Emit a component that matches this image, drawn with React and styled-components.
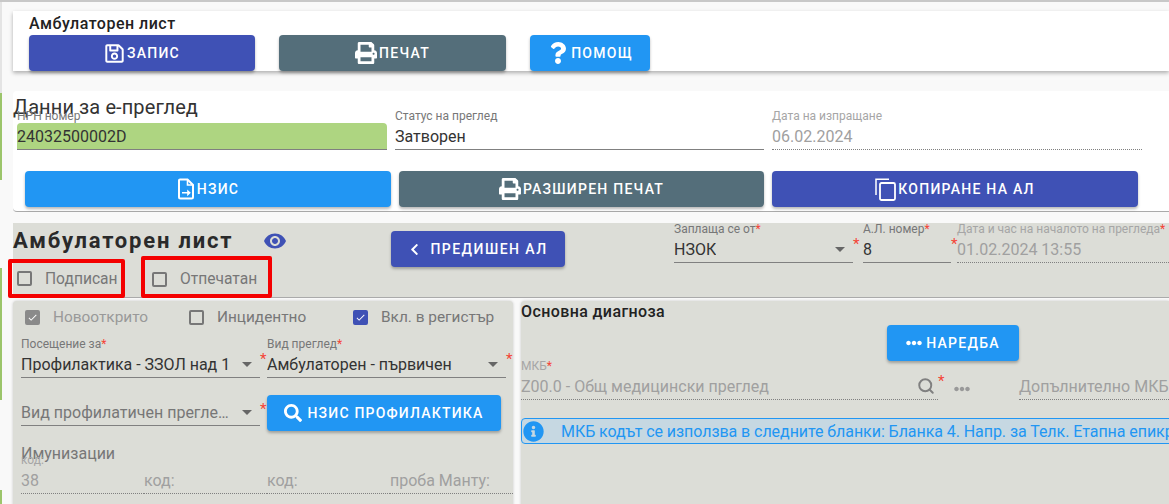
import React from "react";
import styled, { createGlobalStyle } from "styled-components";
import {
  FaRegSave,
  FaPrint,
  FaQuestion,
  FaChevronLeft,
  FaSearch,
  FaEllipsisH,
  FaInfoCircle,
} from "react-icons/fa";
import { FiSearch } from "react-icons/fi";
import { MdVisibility, MdArrowDropDown, MdCheck } from "react-icons/md";

const INDIGO = "#3f51b5";
const SLATE = "#546e7a";
const BLUE = "#2196f3";
const SHEET = "#dcddd7";

const GlobalStyle = createGlobalStyle`
  html, body {
    margin: 0;
    padding: 0;
    font-family: Roboto, "Liberation Sans", sans-serif;
    color: #222;
  }
  * {
    box-sizing: border-box;
  }
`;

const Page = styled.div`
  height: 504px;
  overflow: hidden;
  padding-left: 13px;
  border-top: 2px solid #c8c8c8;
  background-color: #f9f9f9;
  background-image: linear-gradient(
    to bottom,
    #e4e4e4 91px,
    #9cc56b 91px,
    #9cc56b 178px,
    transparent 178px,
    transparent 266px,
    #9cc56b 266px,
    #9cc56b 398px,
    transparent 398px,
    transparent 488px,
    #9cc56b 488px
  );
  background-size: 2px 100%;
  background-repeat: no-repeat;
`;

const ActionCard = styled.section`
  margin-top: 9px;
  height: 60px;
  padding: 1px 0 0 16px;
  background: #fff;
  box-shadow: 0 2px 4px rgba(0, 0, 0, 0.3);
`;

const CardTitle = styled.div`
  font-size: 16px;
  font-weight: 500;
  letter-spacing: 0.5px;
  line-height: 23px;
`;

const ButtonRow = styled.div`
  display: flex;
  gap: 24px;
`;

const Button = styled.button`
  display: flex;
  align-items: center;
  justify-content: center;
  gap: ${(p) => p.$gap ?? 2}px;
  flex: none;
  width: ${(p) => (p.$w ? `${p.$w}px` : "auto")};
  height: 36px;
  padding: 0;
  border: none;
  border-radius: 4px;
  background: ${(p) => p.$color};
  color: #fff;
  font-family: inherit;
  font-size: 14px;
  font-weight: 500;
  letter-spacing: 1.25px;
  text-transform: uppercase;
  box-shadow: 0 2px 3px rgba(0, 0, 0, 0.28);

  svg {
    flex: none;
  }
`;

const ExamCard = styled.section`
  margin-top: 20px;
  height: 121px;
  padding-top: 4px;
  background: #fff;
  border-radius: 4px 0 0 4px;
  border-bottom: 1px solid #aaa;
`;

const ExamTitle = styled.h2`
  margin: 0;
  font-size: 20px;
  font-weight: 400;
  letter-spacing: 0.1px;
  line-height: 24px;
  color: #333;
`;

const ExamFields = styled.div`
  display: grid;
  grid-template-columns: 370px 369px 370px;
  gap: 8px;
  margin: -9px 0 0 4px;
`;

const Field = styled.div`
  position: relative;
  min-width: 0;
`;

const FieldLabel = styled.div`
  height: 13px;
  font-size: 12px;
  line-height: 12px;
  color: ${(p) => (p.$muted ? "#a6a6a6" : "#777")};
  white-space: nowrap;
`;

const FieldValue = styled.div`
  display: flex;
  align-items: center;
  justify-content: space-between;
  height: 27px;
  font-size: 16px;
  color: ${(p) => (p.$muted ? "#a0a0a0" : "#333")};
  background: ${(p) => p.$fill || "transparent"};
  border-radius: ${(p) => (p.$fill ? "4px 4px 0 0" : "0")};
  border-bottom: 1px ${(p) => (p.$dotted ? "dotted" : "solid")} #808080;
  white-space: nowrap;
`;

const ValueText = styled.span`
  overflow: hidden;
  width: ${(p) => p.$w || "auto"};
  text-overflow: ${(p) => (p.$ellipsis ? "ellipsis" : "clip")};
  color: ${(p) => p.$color || "inherit"};
`;

const Caret = styled(MdArrowDropDown)`
  flex: none;
  margin-right: 1px;
  color: #666;
`;

const LensIcon = styled(FiSearch)`
  flex: none;
  margin-right: 3px;
  color: #808080;
  stroke-width: 2.6;
`;

const Req = styled.span`
  color: #f44336;
`;

const ReqMark = styled.span`
  display: block;
  padding-top: 14px;
  font-size: 15px;
  line-height: 15px;
  color: #f44336;
`;

const ExamButtons = styled.div`
  display: grid;
  grid-template-columns: 366px 365px 366px;
  gap: 8px;
  margin: 21px 0 0 12px;
`;

const Sheet = styled.section`
  display: flex;
  align-items: flex-start;
  height: 75px;
  margin-top: 11px;
  background: ${SHEET};
  border-bottom: 1px solid #aaa;
`;

const SheetLeft = styled.div`
  flex: none;
  width: 378px;
  height: 75px;
`;

const SheetHead = styled.div`
  display: flex;
  align-items: center;
  gap: 30px;
  height: 33px;
  padding-top: 3px;
`;

const SheetTitle = styled.h1`
  margin: 0;
  font-size: 22px;
  font-weight: 700;
  letter-spacing: 1.8px;
  line-height: 30px;
  color: #2a2a2a;
`;

const Eye = styled(MdVisibility)`
  color: ${INDIGO};
`;

const Marks = styled.div`
  display: flex;
  align-items: flex-end;
  gap: 16px;
  height: 42px;
  margin-left: -5px;
`;

const MarkBox = styled.div`
  display: flex;
  align-items: center;
  gap: 13px;
  width: ${(p) => p.$w}px;
  height: ${(p) => p.$h}px;
  padding: ${(p) => p.$pt}px 0 0 ${(p) => p.$pl}px;
  border: 4px solid #f40000;
  border-radius: 2px;
  font-size: 15.6px;
  color: #777;
`;

const Box = styled.span`
  display: flex;
  align-items: center;
  justify-content: center;
  flex: none;
  width: 15px;
  height: 15px;
  border: 2px solid ${(p) => p.$color || "#777"};
  border-radius: 2px;
  background: ${(p) => (p.$checked ? p.$color : "transparent")};
  color: ${(p) => (p.$checked ? "#fff" : "transparent")};
`;

const PrevButton = styled(Button)`
  margin-top: 8px;
  letter-spacing: 1.45px;
`;

const SheetFields = styled.div`
  display: grid;
  grid-template-columns: 179px 10px 88px 6px 212px;
  margin-left: 109px;
`;

const Lower = styled.div`
  display: flex;
  gap: 8px;
  margin-top: 3px;
  height: 206px;
`;

const LeftCard = styled.section`
  flex: none;
  width: 500px;
  padding-left: 8px;
  background: ${SHEET};
  border-radius: 4px 4px 0 0;
  box-shadow: 0 0 3px rgba(0, 0, 0, 0.2);
`;

const Checks = styled.div`
  display: grid;
  grid-template-columns: 164px 164px 1fr;
  align-items: center;
  height: 37px;
  padding: 1px 0 6px 4px;
`;

const Check = styled.div`
  display: flex;
  align-items: center;
  gap: 13px;
  font-size: 15.4px;
  color: ${(p) => (p.$muted ? "#999" : "#777")};
`;

const SelectGrid = styled.div`
  display: grid;
  grid-template-columns: 239px 7px 239px 7px;
`;

const SecondRow = styled(SelectGrid)`
  margin-top: 17px;
`;

const PlainField = styled(Field)`
  padding-top: 4px;
`;

const TallReq = styled(ReqMark)`
  padding-top: 7px;
`;

const SearchButton = styled(Button)`
  letter-spacing: 1.2px;
  gap: 5px;
`;

const Immun = styled.div`
  margin-top: 13px;
  font-size: 16px;
  line-height: 20px;
  color: #777;
`;

const ImmunRow = styled.div`
  display: grid;
  grid-template-columns: repeat(4, 123px);
  margin-top: -10px;
`;

const RightCard = styled.section`
  flex: 1;
  min-width: 0;
  overflow: hidden;
  background: ${SHEET};
  border-radius: 4px 0 0 0;
  box-shadow: 0 0 3px rgba(0, 0, 0, 0.2);
`;

const RightTitle = styled.div`
  padding-top: 1px;
  font-size: 16px;
  font-weight: 500;
  letter-spacing: 0.4px;
  line-height: 20px;
`;

const OrdinanceButton = styled(Button)`
  margin: 3px 0 0 366px;
  gap: 4px;
`;

const DiagnosisRow = styled.div`
  display: grid;
  grid-template-columns: 417px 16px 65px 150px;
  margin-top: -1px;
`;

const MoreDots = styled.div`
  padding-top: 21px;
  color: #999;
`;

const Alert = styled.div`
  display: flex;
  align-items: center;
  gap: 17px;
  width: 760px;
  height: 26px;
  margin-top: 17px;
  padding-left: 1px;
  border: 1px solid ${BLUE};
  border-radius: 4px;
  background: #c6d8e2;
  color: ${BLUE};
  font-size: 16px;
  letter-spacing: -0.06px;
  white-space: nowrap;
`;

const FileIcon = () => (
  <svg width="18" height="22" viewBox="0 0 18 22" fill="none">
    <path
      d="M3 1.5h7.5L16 7v12a1.5 1.5 0 0 1-1.5 1.5h-11A1.5 1.5 0 0 1 2 19V2.5a1 1 0 0 1 1-1z"
      stroke="#fff"
      strokeWidth="2"
    />
    <path d="M10.5 1.5V7H16" stroke="#fff" strokeWidth="1.6" />
    <path d="M5 14h5.2v-2.6l3.6 3.4-3.6 3.4v-2.6H5z" fill="#fff" />
  </svg>
);

const CopyIcon = () => (
  <svg width="21" height="23" viewBox="0 0 21 23" fill="none">
    <path d="M1 17V1.2h13" stroke="#fff" strokeWidth="1.5" />
    <rect x="5" y="5" width="15" height="17" rx="1.5" stroke="#fff" strokeWidth="1.8" />
  </svg>
);

function Select({ label, text, width, ellipsis, color }) {
  return (
    <Field>
      {label && (
        <FieldLabel>
          {label}
          <Req>*</Req>
        </FieldLabel>
      )}
      <FieldValue>
        <ValueText $w={width} $ellipsis={ellipsis} $color={color}>
          {text}
        </ValueText>
        <Caret size={24} />
      </FieldValue>
    </Field>
  );
}

function Input({ label, value, muted, required, fill, dotted }) {
  return (
    <Field>
      <FieldLabel $muted={muted}>
        {label}
        {required && <Req>*</Req>}
      </FieldLabel>
      <FieldValue $muted={muted} $fill={fill} $dotted={dotted}>
        {value}
      </FieldValue>
    </Field>
  );
}

export default function App() {
  return (
    <Page>
      <GlobalStyle />
      <ActionCard>
        <CardTitle>Амбулаторен лист</CardTitle>
        <ButtonRow>
          <Button $color={INDIGO} $w={226}>
            <FaRegSave size={21} />
            Запис
          </Button>
          <Button $color={SLATE} $w={227}>
            <FaPrint size={22} />
            Печат
          </Button>
          <Button $color={BLUE} $w={120}>
            <FaQuestion size={22} />
            Помощ
          </Button>
        </ButtonRow>
      </ActionCard>

      <ExamCard>
        <ExamTitle>Данни за е-преглед</ExamTitle>
        <ExamFields>
          <Input label="НРН номер" value="24032500002D" fill="#aed581" />
          <Input label="Статус на преглед" value="Затворен" />
          <Input label="Дата на изпращане" value="06.02.2024" muted dotted />
        </ExamFields>
        <ExamButtons>
          <Button $color={BLUE}>
            <FileIcon />
            НЗИС
          </Button>
          <Button $color={SLATE}>
            <FaPrint size={22} />
            Разширен печат
          </Button>
          <Button $color={INDIGO}>
            <CopyIcon />
            Копиране на АЛ
          </Button>
        </ExamButtons>
      </ExamCard>

      <Sheet>
        <SheetLeft>
          <SheetHead>
            <SheetTitle>Амбулаторен лист</SheetTitle>
            <Eye size={24} />
          </SheetHead>
          <Marks>
            <MarkBox $w={117} $h={39} $pt={0} $pl={5}>
              <Box />
              Подписан
            </MarkBox>
            <MarkBox $w={131} $h={42} $pt={4} $pl={7}>
              <Box />
              Отпечатан
            </MarkBox>
          </Marks>
        </SheetLeft>
        <PrevButton $color={INDIGO} $w={174} $gap={9}>
          <FaChevronLeft size={13} />
          Предишен АЛ
        </PrevButton>
        <SheetFields>
          <Select label="Заплаща се от" text="НЗОК" />
          <ReqMark>*</ReqMark>
          <Input label="А.Л. номер" value="8" required />
          <ReqMark>*</ReqMark>
          <Input
            label="Дата и час на началото на прегледа"
            value="01.02.2024 13:55"
            required
            muted
            dotted
          />
        </SheetFields>
      </Sheet>

      <Lower>
        <LeftCard>
          <Checks>
            <Check $muted>
              <Box $color="#8a8a8a" $checked>
                <MdCheck size={13} />
              </Box>
              Новооткрито
            </Check>
            <Check>
              <Box />
              Инцидентно
            </Check>
            <Check>
              <Box $color={INDIGO} $checked>
                <MdCheck size={13} />
              </Box>
              Вкл. в регистър
            </Check>
          </Checks>
          <SelectGrid>
            <Select
              label="Посещение за"
              text="Профилактика - ЗЗОЛ над 18 г."
              width="209px"
            />
            <ReqMark>*</ReqMark>
            <Select label="Вид преглед" text="Амбулаторен - първичен" />
            <ReqMark>*</ReqMark>
          </SelectGrid>
          <SecondRow>
            <PlainField>
              <Select
                text="Вид профилатичен преглед за"
                width="213px"
                ellipsis
                color="#777"
              />
            </PlainField>
            <TallReq>*</TallReq>
            <SearchButton $color={BLUE} $w={234}>
              <FaSearch size={18} />
              НЗИС профилактика
            </SearchButton>
          </SecondRow>
          <Immun>Имунизации</Immun>
          <ImmunRow>
            <Input label="код:" value="38" muted dotted />
            <Input label="" value="код:" muted dotted />
            <Input label="" value="код:" muted dotted />
            <Input label="" value="проба Манту:" muted dotted />
          </ImmunRow>
        </LeftCard>

        <RightCard>
          <RightTitle>Основна диагноза</RightTitle>
          <OrdinanceButton $color={BLUE} $w={132}>
            <FaEllipsisH size={16} />
            Наредба
          </OrdinanceButton>
          <DiagnosisRow>
            <Field>
              <FieldLabel $muted>
                МКБ
                <Req>*</Req>
              </FieldLabel>
              <FieldValue $muted $dotted>
                Z00.0 - Общ медицински преглед
                <LensIcon size={18} />
              </FieldValue>
            </Field>
            <ReqMark>*</ReqMark>
            <MoreDots>
              <FaEllipsisH size={16} />
            </MoreDots>
            <Input label="" value="Допълнително МКБ" muted dotted />
          </DiagnosisRow>
          <Alert>
            <FaInfoCircle size={21} />
            МКБ кодът се използва в следните бланки: Бланка 4. Напр. за Телк. Етапна епикриза
          </Alert>
        </RightCard>
      </Lower>
    </Page>
  );
}
